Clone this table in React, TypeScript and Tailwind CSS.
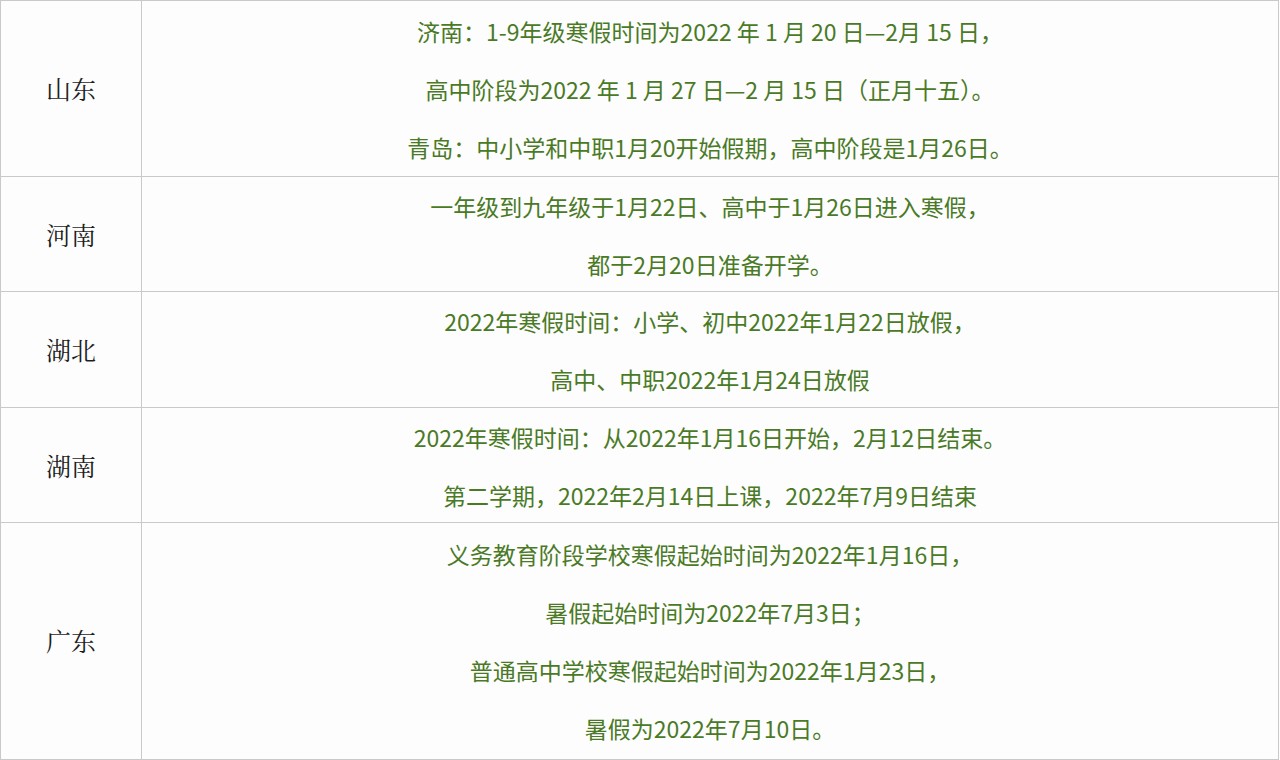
const ROWS = [
  {
    name: '山东',
    h: 'h-[176px]',
    lines: [
      '济南：1-9年级寒假时间为2022 年 1 月 20 日—2月 15 日，',
      '高中阶段为2022 年 1 月 27 日—2 月 15 日（正月十五）。',
      '青岛：中小学和中职1月20开始假期，高中阶段是1月26日。',
    ],
  },
  {
    name: '河南',
    h: 'h-[115px]',
    lines: ['一年级到九年级于1月22日、高中于1月26日进入寒假，', '都于2月20日准备开学。'],
  },
  {
    name: '湖北',
    h: 'h-[116px]',
    lines: ['2022年寒假时间：小学、初中2022年1月22日放假，', '高中、中职2022年1月24日放假'],
  },
  {
    name: '湖南',
    h: 'h-[115px]',
    lines: ['2022年寒假时间：从2022年1月16日开始，2月12日结束。', '第二学期，2022年2月14日上课，2022年7月9日结束'],
  },
  {
    name: '广东',
    h: 'h-[237px]',
    lines: [
      '义务教育阶段学校寒假起始时间为2022年1月16日，',
      '暑假起始时间为2022年7月3日；',
      '普通高中学校寒假起始时间为2022年1月23日，',
      '暑假为2022年7月10日。',
    ],
  },
];

export default function App() {
  return (
    <div className="w-[1280px] h-[760px] overflow-hidden bg-[#fdfdfd] font-['Noto_Sans_CJK_SC',sans-serif]">
      <div className="w-[1279px] border-t border-l border-r border-[#c9c9c9]">
        {ROWS.map((row) => (
          <div key={row.name} className={`grid grid-cols-[141px_1fr] border-b border-[#c9c9c9] ${row.h}`}>
            <div className="flex items-center justify-center border-r border-[#c9c9c9] text-[25px] text-[#1e1e1e] font-['Noto_Serif_CJK_SC','Noto_Sans_CJK_SC',serif]">
              {row.name}
            </div>
            <div className="flex flex-col justify-center items-center text-[23px] leading-[58px] text-[#4a7a26]">
              {row.lines.map((line) => (
                <div key={line}>{line}</div>
              ))}
            </div>
          </div>
        ))}
      </div>
    </div>
  );
}
